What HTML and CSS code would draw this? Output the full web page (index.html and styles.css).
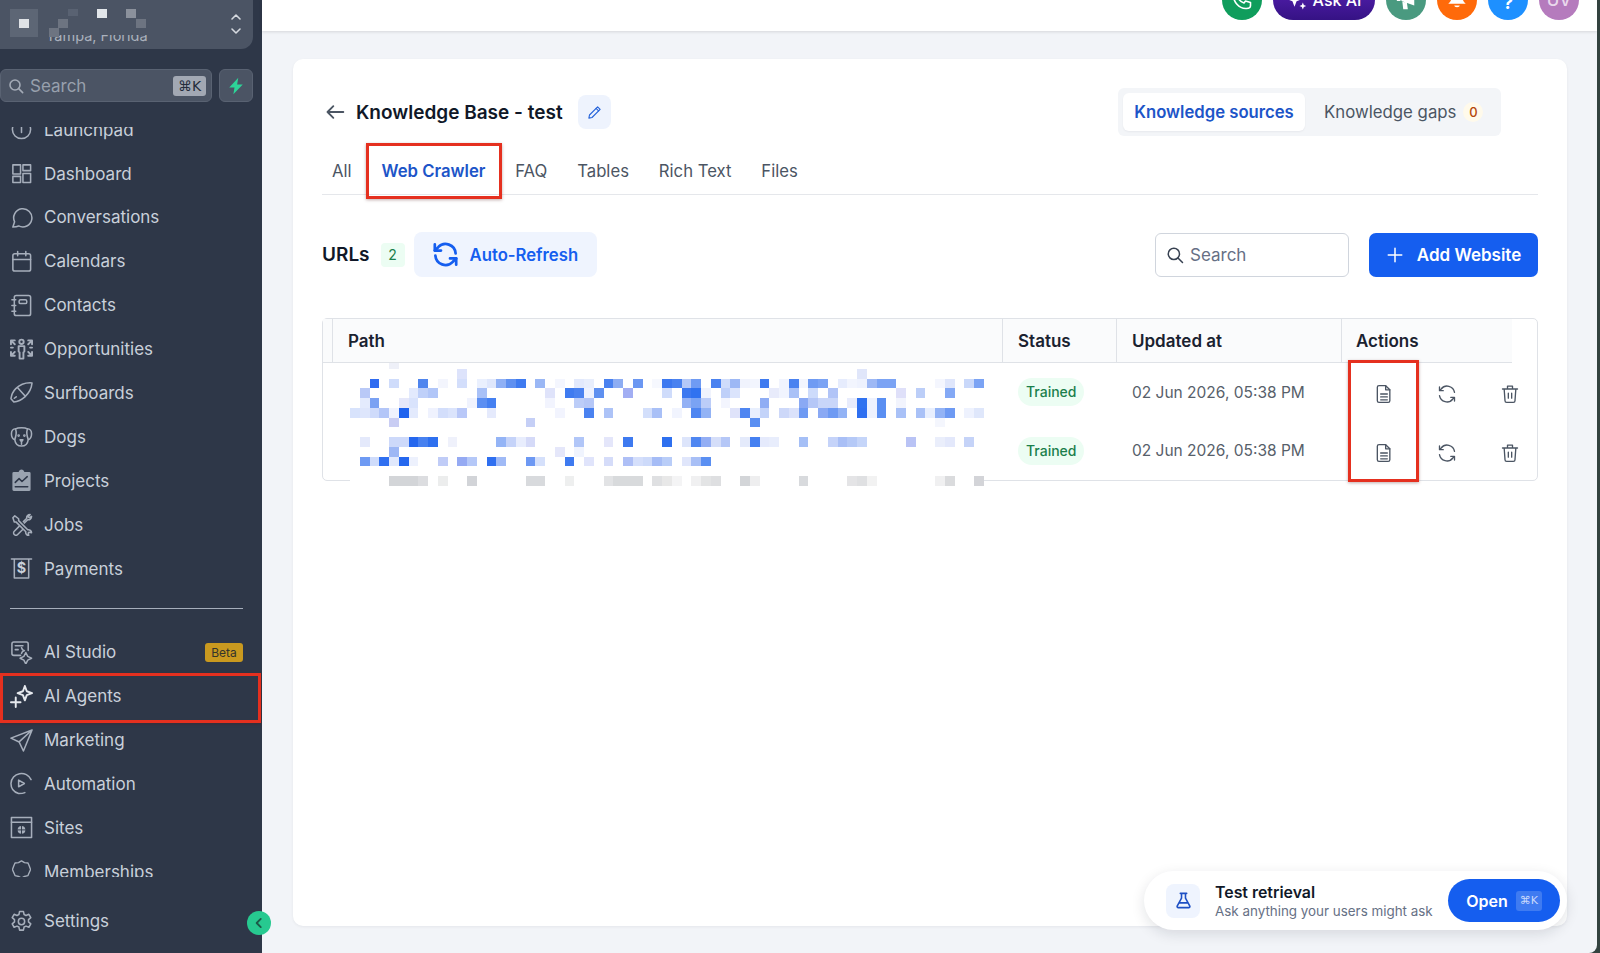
FILE: index.html
```html
<!DOCTYPE html>
<html lang="en">
<head>
  <meta charset="UTF-8" />
  <title>Knowledge Base - test</title>
  <link rel="stylesheet" href="styles.css">
</head>
<body>
<div class="app">

  <!-- Sidebar -->
  <aside class="sidebar">
    <div class="account">
      <span class="account-place">Tampa, Florida</span>
      <svg class="account-mosaic" viewBox="0 0 200 49">
        <rect class="plain" x="0" y="0" width="200" height="35" fill="#4b5464"/>
        <rect class="plain" x="10" y="9" width="28" height="28" fill="#5d6675"/>
        <rect class="plain" x="19" y="19" width="10" height="9" fill="#dfe2e6"/>
        <rect class="plain" x="97" y="9" width="10" height="9" fill="#e2e6ea"/>
        <rect class="plain" x="126" y="9" width="10" height="9" fill="#8b919c"/>
        <rect class="plain" x="136" y="19" width="10" height="9" fill="#6d7481"/>
        <rect class="plain" x="58" y="19" width="10" height="9" fill="#6d7481"/>
        <rect class="plain" x="49" y="28" width="10" height="9" fill="#6d7481"/>
        <rect class="plain" x="68" y="9" width="10" height="7" fill="#596272"/>
      </svg>
      <svg class="account-chevrons" viewBox="0 0 14 24" fill="none" stroke="#d5d9df" stroke-width="1.6" stroke-linecap="round" stroke-linejoin="round">
        <path d="M3 7l4-4 4 4"/><path d="M3 17l4 4 4-4"/>
      </svg>
    </div>

    <div class="side-search-row">
      <div class="side-search">
        <svg class="icon-16" viewBox="0 0 24 24" fill="none" stroke="#a3aab6" stroke-width="2.4" stroke-linecap="round"><circle cx="10.5" cy="10.5" r="7.5"/><path d="M16 16l6 6"/></svg>
        <span class="side-search-text">Search</span>
        <span class="side-kbd">⌘K</span>
      </div>
      <div class="side-bolt">
        <svg class="icon-18" viewBox="0 0 24 24" fill="#2dd498"><path d="M15 1L3 14h7L8.500 23 21 10h-7.500z"/></svg>
      </div>
    </div>

    <nav class="nav-scroll">
      <div class="nav-list">
        <a class="nav-item">
          <svg class="nav-icon" viewBox="0 0 24 24"><circle cx="12" cy="12" r="9.5"/><path d="M12 8v7"/></svg>
          <span>Launchpad</span>
        </a>
        <a class="nav-item">
          <svg class="nav-icon" viewBox="0 0 24 24"><rect x="3" y="3" width="8" height="9.500"/><rect x="13.500" y="3" width="8" height="6"/><rect x="3" y="15" width="8" height="6.500"/><rect x="13.500" y="12" width="8" height="9.500"/></svg>
          <span>Dashboard</span>
        </a>
        <a class="nav-item">
          <svg class="nav-icon" viewBox="0 0 24 24"><path d="M3 22l1.800-5.500A9.500 9.500 0 1 1 9 20.800c-1.500.6-3.500 1-6 1.200z"/></svg>
          <span>Conversations</span>
        </a>
        <a class="nav-item">
          <svg class="nav-icon" viewBox="0 0 24 24"><rect x="3" y="4" width="18.500" height="18" rx="2"/><path d="M3 10h18.500M8 1.500V6M16.500 1.500V6"/></svg>
          <span>Calendars</span>
        </a>
        <a class="nav-item">
          <svg class="nav-icon" viewBox="0 0 24 24"><rect x="4.500" y="1.500" width="17" height="21" rx="2"/><rect x="9.500" y="6" width="8" height="4" rx="1.500"/><path d="M2 6h4M2 12h4M2 18h4"/></svg>
          <span>Contacts</span>
        </a>
        <a class="nav-item">
          <svg class="nav-icon nav-icon-dense" viewBox="0 0 24 24"><circle cx="12" cy="4" r="2.300"/><path d="M9 8.500h6v5.500l-1 1v6.500h-4V15l-1-1z"/><path d="M1 6.500V2.500h4M1.500 3l3.500 3.500M23 6.500V2.500h-4M22.500 3L19 6.500M1 14.500v4h4M1.500 18l3.500-3.500M23 14.500v4h-4M22.500 18L19 14.500M1 10h2M21 10h2"/></svg>
          <span>Opportunities</span>
        </a>
        <a class="nav-item">
          <svg class="nav-icon" viewBox="0 0 24 24"><path d="M23 2c-7-.5-13 2-17 6-3 3-4.500 7-5 10.500L4 22c3.500-.5 8-2.500 11.500-5.500 4.500-4 7-9 7.500-14.500z"/><path d="M4.500 18l2-1.500M8 7l8 9"/></svg>
          <span>Surfboards</span>
        </a>
        <a class="nav-item">
          <svg class="nav-icon" viewBox="0 0 24 24"><path d="M6 4C3 4 1.500 6 1.500 9c0 3 1.500 5.500 3.500 6.500C5.500 19 8 22 12 22s6.500-3 7-6.500c2-1 3.500-3.500 3.500-6.500 0-3-1.500-5-4.500-5-2-1.500-10-1.500-12 0z"/><path d="M6 5c1 3 .5 6-1 10M18 5c-1 3-.5 6 1 10M10.500 15.500h3L12 17.500zM12 17.500V20"/><circle cx="9" cy="11" r=".6"/><circle cx="15" cy="11" r=".6"/></svg>
          <span>Dogs</span>
        </a>
        <a class="nav-item">
          <svg class="nav-icon nav-icon-fill" viewBox="0 0 24 24"><path d="M4 3h5c.5-1.500 1.500-2.500 3-2.500S14.500 1.500 15 3h5a1.500 1.500 0 0 1 1.500 1.500v17A1.500 1.500 0 0 1 20 23H4a1.500 1.500 0 0 1-1.500-1.500v-17A1.500 1.500 0 0 1 4 3z"/><path class="cut" d="M5.500 14l4-4 3 3 5.500-5M5.500 18.500h13"/></svg>
          <span>Projects</span>
        </a>
        <a class="nav-item">
          <svg class="nav-icon" viewBox="0 0 24 24"><path d="M3 5l2-2 4 3v2l9.500 9.500c2-.5 4 1 4 3l-2.500-.5-1 1 .5 2.500c-2 0-3.500-2-3-4L6.500 9.500h-2z"/><path d="M14 9l3.500-3.500c-.5-2 1-4 3.500-4L19 4l1 1 2.500-1.500c0 2.500-2 4-4 3.500L15 10.500M9.500 14l-5 5c-1 1-1 2.500 0 3.500s2.500 1 3.500 0l5-5"/></svg>
          <span>Jobs</span>
        </a>
        <a class="nav-item">
          <svg class="nav-icon" viewBox="0 0 24 24"><path d="M1.500 2h21M4.500 2v20h15V2"/><text class="nav-icon-text" x="12" y="17" text-anchor="middle">$</text></svg>
          <span>Payments</span>
        </a>
        <hr class="nav-divider">
        <a class="nav-item">
          <svg class="nav-icon" viewBox="0 0 24 24"><path d="M11 15H4a2 2 0 0 1-2-2V3a2 2 0 0 1 2-2h13a2 2 0 0 1 2 2v7"/><path d="M5.500 5h8M5.500 9h3"/><path d="M16.500 12l2 4 4 2-4 2-2 4-2-4-4-2 4-2z"/><path d="M12 7l1 2 2 1-2 1-1 2"/></svg>
          <span>AI Studio</span>
          <span class="beta">Beta</span>
        </a>
        <a class="nav-item">
          <svg class="nav-icon nav-icon-bright" viewBox="0 0 24 24"><path d="M15.500 1l2 5.500 5.500 2-5.500 2-2 5.500-2-5.500-5.500-2 5.500-2z"/><path d="M6 13v10M1 18h10"/></svg>
          <span>AI Agents</span>
        </a>
        <a class="nav-item">
          <svg class="nav-icon" viewBox="0 0 24 24"><path d="M23 1L1 9.500l8.500 4L14 23zM23 1L9.500 13.500"/></svg>
          <span>Marketing</span>
        </a>
        <a class="nav-item">
          <svg class="nav-icon" viewBox="0 0 24 24"><path d="M22 8A11 11 0 0 0 1 12c0 5 3 9 8 10.500 2 0 4.500 0 6.500-1"/><path d="M9 8.500v7l6-3.500z"/></svg>
          <span>Automation</span>
        </a>
        <a class="nav-item">
          <svg class="nav-icon" viewBox="0 0 24 24"><rect x="1.500" y="1.500" width="21" height="21"/><path d="M1.500 6.500h21"/><circle class="solid" cx="12" cy="14.500" r="4"/><path class="cut-thin" d="M8 14.500h8M12 10.500v8"/></svg>
          <span>Sites</span>
        </a>
        <a class="nav-item nav-item-clipped">
          <svg class="nav-icon" viewBox="1 1 22 22"><path d="M12 2l3.500 2 4 .5 1.500 3.500 1.500 4-1.500 3.500-1.500 3.500-4 1-3.500 2-3.500-2-4-1L3 15.500 1.500 12 3 8l1.500-3.500 4-.5z"/></svg>
          <span>Memberships</span>
        </a>
      </div>
    </nav>

    <a class="nav-item nav-settings">
      <svg class="nav-icon" viewBox="0 0 24 24"><circle cx="12" cy="12" r="3.300"/><path d="M10 1.500h4l.7 3.200 2 1 3-1.200 2 3.500-2.400 2.100v2.300l2.400 2.100-2 3.500-3-1.200-2 1-.7 3.200h-4l-.7-3.200-2-1-3 1.200-2-3.500 2.400-2.100v-2.300L2.300 8l2-3.500 3 1.200 2-1z"/></svg>
      <span>Settings</span>
    </a>

    <div class="annot annot-agents"></div>
  </aside>

  <button class="collapse">
    <svg viewBox="0 0 24 24" fill="none" stroke="#1c5a48" stroke-width="3.200" stroke-linecap="round" stroke-linejoin="round"><path d="M15 5l-7 7 7 7"/></svg>
  </button>

  <!-- Main -->
  <div class="main">
    <header class="topbar">
      <span class="top-circle top-phone">
        <svg viewBox="0 0 24 24" fill="none" stroke="#fff" stroke-width="1.600" stroke-linecap="round" stroke-linejoin="round"><path d="M5 2l3 0 1.500 5-2 1.500c1 3 3.500 5.500 6.500 6.500l1.500-2 5 1.500 0 3c0 2-2 3-4 3C9 21 3 14 3 5c0-1.500 .5-3 2-3z"/></svg>
      </span>
      <span class="ask-ai">
        <svg viewBox="0 0 24 24" fill="#fff"><path d="M9 2l2.500 6.500L18 11l-6.500 2.500L9 20l-2.500-6.500L0 11l6.500-2.500z"/><path d="M19 15l1.200 3 2.800 1.200-2.800 1.200L19 23.500l-1.200-3.100-2.800-1.200 2.800-1.200z"/></svg>
        Ask AI
      </span>
      <span class="top-circle top-news">
        <svg viewBox="0 0 24 24" fill="#fff"><path d="M2 4h4v9H2zM7 5l14-4v17L7 13zM8 14l5 1 1 7H9z"/></svg>
      </span>
      <span class="top-circle top-bell">
        <svg viewBox="0 0 24 24" fill="#fff"><path d="M12 1c4 0 6 3 6 7 0 4 1 6 3.500 8h-19C5 14 6 12 6 8c0-4 2-7 6-7z"/><path d="M9 18h6a3 2 0 0 1-6 0z"/></svg>
      </span>
      <span class="top-circle top-help">?</span>
      <span class="top-circle top-user">UV</span>
    </header>

    <div class="content">
      <section class="card">
        <div class="kb-head">
          <div class="kb-title-wrap">
            <svg class="kb-back" viewBox="0 0 24 24" fill="none" stroke="#4b5563" stroke-width="2.200" stroke-linecap="round" stroke-linejoin="round"><path d="M22 12H3M10 5l-7 7 7 7"/></svg>
            <h1 class="kb-title">Knowledge Base - test</h1>
            <span class="kb-edit">
              <svg viewBox="0 0 24 24" fill="none" stroke="#2563d9" stroke-width="1.800" stroke-linecap="round" stroke-linejoin="round"><path d="M17 3l4 4L8 20l-5 1 1-5z"/><path d="M14.500 5.500l4 4"/></svg>
            </span>
          </div>
          <div class="segment">
            <span class="segment-item segment-on">Knowledge sources</span>
            <span class="segment-item">Knowledge gaps <b class="gap-count">0</b></span>
          </div>
        </div>

        <div class="tabs">
          <span class="tab">All</span>
          <span class="tab tab-on">Web Crawler</span>
          <span class="tab">FAQ</span>
          <span class="tab">Tables</span>
          <span class="tab">Rich Text</span>
          <span class="tab">Files</span>
          <div class="annot annot-tab"></div>
        </div>

        <div class="url-bar">
          <span class="url-label">URLs</span>
          <span class="url-count">2</span>
          <button class="auto-refresh">
            <svg viewBox="0 0 24 24" fill="none" stroke="#155eef" stroke-width="2.400" stroke-linecap="round" stroke-linejoin="round"><path d="M21 11A9 9 0 0 0 5.500 5.500L2.500 8.500"/><path d="M2.500 3v5.500H8"/><path d="M3 13a9 9 0 0 0 15.500 5.500l3-3"/><path d="M21.500 21v-5.500H16"/></svg>
            Auto-Refresh
          </button>
          <div class="url-search">
            <svg viewBox="0 0 24 24" fill="none" stroke="#374151" stroke-width="2" stroke-linecap="round"><circle cx="10.500" cy="10.500" r="7.500"/><path d="M16 16l6 6"/></svg>
            Search
          </div>
          <button class="add-site">
            <svg viewBox="0 0 24 24" fill="none" stroke="#fff" stroke-width="2" stroke-linecap="round"><path d="M12 3v18M3 12h18"/></svg>
            Add Website
          </button>
        </div>

        <div class="url-table">
          <div class="tr thead">
            <div class="th th-stub"></div>
            <div class="th">Path</div>
            <div class="th">Status</div>
            <div class="th">Updated at</div>
            <div class="th th-last">Actions</div>
          </div>
          <div class="tr">
            <div class="td"></div>
            <div class="td"></div>
            <div class="td"><span class="pill">Trained</span></div>
            <div class="td td-date">02 Jun 2026, 05:38 PM</div>
            <div class="td td-actions">
              <svg class="act" viewBox="0 0 24 24"><path d="M6 2h8l5 5v13a2 2 0 0 1-2 2H6a2 2 0 0 1-2-2V4a2 2 0 0 1 2-2z"/><path d="M14 2v5h5M8 12h8M8 15.500h8M8 19h8"/></svg>
              <svg class="act" viewBox="0 0 24 24"><path d="M21 10A9 9 0 0 0 5 6L3.500 7.500"/><path d="M3 3.500V8h4.500"/><path d="M3 14a9 9 0 0 0 16 4l1.500-1.500"/><path d="M21 20.500V16h-4.500"/></svg>
              <svg class="act" viewBox="0 0 24 24"><path d="M3 6h18M9 6V2.500h6V6M5 6l1 14a2 2 0 0 0 2 2h8a2 2 0 0 0 2-2l1-14M10 11v6M14 11v6"/></svg>
            </div>
          </div>
          <div class="tr">
            <div class="td"></div>
            <div class="td"></div>
            <div class="td"><span class="pill">Trained</span></div>
            <div class="td td-date">02 Jun 2026, 05:38 PM</div>
            <div class="td td-actions">
              <svg class="act" viewBox="0 0 24 24"><path d="M6 2h8l5 5v13a2 2 0 0 1-2 2H6a2 2 0 0 1-2-2V4a2 2 0 0 1 2-2z"/><path d="M14 2v5h5M8 12h8M8 15.500h8M8 19h8"/></svg>
              <svg class="act" viewBox="0 0 24 24"><path d="M21 10A9 9 0 0 0 5 6L3.500 7.500"/><path d="M3 3.500V8h4.500"/><path d="M3 14a9 9 0 0 0 16 4l1.500-1.500"/><path d="M21 20.500V16h-4.500"/></svg>
              <svg class="act" viewBox="0 0 24 24"><path d="M3 6h18M9 6V2.500h6V6M5 6l1 14a2 2 0 0 0 2 2h8a2 2 0 0 0 2-2l1-14M10 11v6M14 11v6"/></svg>
            </div>
          </div>

          <!-- blurred out urls -->
          <svg class="mosaic" viewBox="0 0 65 13" shape-rendering="crispEdges">
            <rect x="4" y="0" fill="#eef0f8"/><rect x="11" y="1" fill="#dde3fb"/><rect x="52" y="1" fill="#e0e6fa"/>
            <rect x="2" y="2" fill="#2f6bf0"/><rect x="4" y="2" fill="#cfdcfb"/><rect x="7" y="2" fill="#4f85ee"/><rect x="9" y="2" fill="#f3f5fd"/><rect x="11" y="2" fill="#d3defb"/><rect x="13" y="2" fill="#eaf0fe"/><rect x="14" y="2" fill="#dfe7fc"/><rect x="15" y="2" fill="#8fb0f5"/><rect x="16" y="2" fill="#5f90f0"/><rect x="17" y="2" fill="#3f7bf0"/><rect x="19" y="2" fill="#9ab7f5"/><rect x="21" y="2" fill="#f4f6fe"/><rect x="23" y="2" fill="#e2e9fc"/><rect x="24" y="2" fill="#e8eefc"/><rect x="26" y="2" fill="#4a82f0"/><rect x="27" y="2" fill="#8dadf3"/><rect x="29" y="2" fill="#6b97f2"/><rect x="31" y="2" fill="#f6f8fe"/><rect x="32" y="2" fill="#3c78f0"/><rect x="33" y="2" fill="#4a82f0"/><rect x="34" y="2" fill="#b5c9f8"/><rect x="35" y="2" fill="#6f9bf3"/><rect x="37" y="2" fill="#4a82f0"/><rect x="38" y="2" fill="#cfdcfb"/><rect x="39" y="2" fill="#9db8f5"/><rect x="40" y="2" fill="#f0f3fd"/><rect x="41" y="2" fill="#f2f5fe"/><rect x="42" y="2" fill="#3f7bf0"/><rect x="44" y="2" fill="#f1f4fe"/><rect x="45" y="2" fill="#4a82f0"/><rect x="46" y="2" fill="#f2f5fe"/><rect x="47" y="2" fill="#6f9bf3"/><rect x="48" y="2" fill="#7ba3f4"/><rect x="50" y="2" fill="#e6ecfd"/><rect x="51" y="2" fill="#f2f5fe"/><rect x="52" y="2" fill="#eef2fe"/><rect x="53" y="2" fill="#9db8f5"/><rect x="54" y="2" fill="#7ba3f4"/><rect x="55" y="2" fill="#7ba3f4"/><rect x="60" y="2" fill="#f4f6fe"/><rect x="61" y="2" fill="#dfe6fb"/><rect x="63" y="2" fill="#c9d8fa"/><rect x="64" y="2" fill="#7ba3f4"/>
            <rect x="1" y="3" fill="#b9c9f7"/><rect x="6" y="3" fill="#e3eafd"/><rect x="7" y="3" fill="#bfd0f9"/><rect x="8" y="3" fill="#b1c6f8"/><rect x="13" y="3" fill="#a9c1f7"/><rect x="20" y="3" fill="#dfe3fa"/><rect x="22" y="3" fill="#3f7bf0"/><rect x="23" y="3" fill="#4a82f0"/><rect x="24" y="3" fill="#eef2fe"/><rect x="25" y="3" fill="#5f90f0"/><rect x="28" y="3" fill="#a2aef3"/><rect x="32" y="3" fill="#cfdcfb"/><rect x="34" y="3" fill="#3c78f0"/><rect x="35" y="3" fill="#3072f0"/><rect x="36" y="3" fill="#f0f3fd"/><rect x="38" y="3" fill="#bfd0f9"/><rect x="39" y="3" fill="#dbe4fc"/><rect x="43" y="3" fill="#e8ebfb"/><rect x="44" y="3" fill="#f1f4fe"/><rect x="45" y="3" fill="#a9c1f7"/><rect x="47" y="3" fill="#cddbfb"/><rect x="49" y="3" fill="#b1c4f7"/><rect x="56" y="3" fill="#dfe0f9"/><rect x="58" y="3" fill="#bccef8"/><rect x="61" y="3" fill="#84a9f5"/>
            <rect x="1" y="4" fill="#e4ebfd"/><rect x="2" y="4" fill="#7aa1f3"/><rect x="5" y="4" fill="#e6e8fa"/><rect x="6" y="4" fill="#d9e3fc"/><rect x="12" y="4" fill="#f0f3fe"/><rect x="13" y="4" fill="#5c8ff2"/><rect x="14" y="4" fill="#4580f1"/><rect x="20" y="4" fill="#f2f4fe"/><rect x="23" y="4" fill="#bccdf8"/><rect x="24" y="4" fill="#b5c7f7"/><rect x="34" y="4" fill="#93b1f5"/><rect x="35" y="4" fill="#7aa3f4"/><rect x="36" y="4" fill="#bccdf8"/><rect x="38" y="4" fill="#f3f5fe"/><rect x="42" y="4" fill="#8fadf4"/><rect x="46" y="4" fill="#8aa9f4"/><rect x="47" y="4" fill="#b5c7f7"/><rect x="48" y="4" fill="#c9d6f9"/><rect x="49" y="4" fill="#c9d6f9"/><rect x="51" y="4" fill="#e8ecfc"/><rect x="52" y="4" fill="#3072f0"/><rect x="53" y="4" fill="#eef2fe"/><rect x="54" y="4" fill="#5a8ff2"/><rect x="56" y="4" fill="#f2f4fd"/>
            <rect x="0" y="5" fill="#d8e3fc"/><rect x="1" y="5" fill="#dee6fc"/><rect x="2" y="5" fill="#cfdbfb"/><rect x="3" y="5" fill="#b3c6f8"/><rect x="4" y="5" fill="#f0f3fe"/><rect x="5" y="5" fill="#1f63ee"/><rect x="6" y="5" fill="#e3eafd"/><rect x="8" y="5" fill="#eff2fe"/><rect x="9" y="5" fill="#d3defb"/><rect x="10" y="5" fill="#dbe4fc"/><rect x="11" y="5" fill="#b9c8f8"/><rect x="14" y="5" fill="#e5eafc"/><rect x="21" y="5" fill="#f2f4fe"/><rect x="24" y="5" fill="#4a82f0"/><rect x="26" y="5" fill="#adc3f7"/><rect x="30" y="5" fill="#d3dffb"/><rect x="31" y="5" fill="#a9c0f7"/><rect x="33" y="5" fill="#f1f4fe"/><rect x="35" y="5" fill="#4f86f1"/><rect x="36" y="5" fill="#93b3f5"/><rect x="39" y="5" fill="#dfe3fa"/><rect x="40" y="5" fill="#4f86f1"/><rect x="41" y="5" fill="#e8effe"/><rect x="42" y="5" fill="#c3d3f9"/><rect x="44" y="5" fill="#cdd8f9"/><rect x="45" y="5" fill="#dbe2fb"/><rect x="46" y="5" fill="#6e9af3"/><rect x="48" y="5" fill="#8aa9f4"/><rect x="49" y="5" fill="#6e9af3"/><rect x="50" y="5" fill="#93b3f5"/><rect x="52" y="5" fill="#2f6ff0"/><rect x="53" y="5" fill="#eef2fe"/><rect x="54" y="5" fill="#5a8ff2"/><rect x="56" y="5" fill="#a9c1f7"/><rect x="58" y="5" fill="#a9c1f7"/><rect x="59" y="5" fill="#e8effe"/><rect x="60" y="5" fill="#93b3f5"/><rect x="61" y="5" fill="#6e9af3"/><rect x="63" y="5" fill="#eef2fe"/><rect x="64" y="5" fill="#dfe7fb"/>
            <rect x="4" y="6" fill="#c9cdf3"/><rect x="18" y="6" fill="#c5cff6"/><rect x="41" y="6" fill="#5a8ff2"/><rect x="60" y="6" fill="#f4f6fd"/>
            <rect x="1" y="8" fill="#e4e9fb"/><rect x="4" y="8" fill="#cdd9fa"/><rect x="5" y="8" fill="#cdd9fa"/><rect x="6" y="8" fill="#2567ee"/><rect x="7" y="8" fill="#4781f0"/><rect x="8" y="8" fill="#2e70ef"/><rect x="10" y="8" fill="#eff1fb"/><rect x="15" y="8" fill="#94b4f6"/><rect x="16" y="8" fill="#c5d3f9"/><rect x="17" y="8" fill="#e8edfd"/><rect x="18" y="8" fill="#d5daf8"/><rect x="23" y="8" fill="#b1c6f8"/><rect x="26" y="8" fill="#e4e6fa"/><rect x="28" y="8" fill="#3e7af0"/><rect x="32" y="8" fill="#2e70ef"/><rect x="34" y="8" fill="#dde5fb"/><rect x="35" y="8" fill="#4f86f1"/><rect x="36" y="8" fill="#93aef4"/><rect x="37" y="8" fill="#d5def9"/><rect x="38" y="8" fill="#b5c7f7"/><rect x="40" y="8" fill="#e4eafb"/><rect x="41" y="8" fill="#4580f1"/><rect x="42" y="8" fill="#e5eafc"/><rect x="43" y="8" fill="#e8edfc"/><rect x="46" y="8" fill="#a5bff6"/><rect x="49" y="8" fill="#c5d3f9"/><rect x="50" y="8" fill="#a9bff6"/><rect x="51" y="8" fill="#b5c9f7"/><rect x="52" y="8" fill="#c5d5f9"/><rect x="57" y="8" fill="#b9c3f5"/><rect x="60" y="8" fill="#eaeefb"/><rect x="61" y="8" fill="#e3e8fb"/><rect x="63" y="8" fill="#c5d3f8"/>
            <rect x="4" y="9" fill="#9db7f5"/><rect x="21" y="9" fill="#e5e7fa"/><rect x="23" y="9" fill="#f0f4fe"/>
            <rect x="1" y="10" fill="#6e9af3"/><rect x="2" y="10" fill="#cfdcfb"/><rect x="3" y="10" fill="#2f6ff0"/><rect x="4" y="10" fill="#e0e8fc"/><rect x="5" y="10" fill="#2567ee"/><rect x="6" y="10" fill="#edf1fd"/><rect x="9" y="10" fill="#c0ccf7"/><rect x="11" y="10" fill="#95aaf3"/><rect x="12" y="10" fill="#b5c8f8"/><rect x="14" y="10" fill="#2f6ff0"/><rect x="15" y="10" fill="#a0baf6"/><rect x="18" y="10" fill="#6d98f3"/><rect x="19" y="10" fill="#d5e0fb"/><rect x="22" y="10" fill="#3e7af0"/><rect x="24" y="10" fill="#e0e4fb"/><rect x="26" y="10" fill="#d5dcf9"/><rect x="28" y="10" fill="#aebff6"/><rect x="29" y="10" fill="#d5dffb"/><rect x="30" y="10" fill="#cddafa"/><rect x="31" y="10" fill="#a5bcf6"/><rect x="32" y="10" fill="#b9cdf8"/><rect x="34" y="10" fill="#e0e6fb"/><rect x="35" y="10" fill="#a8bff6"/><rect x="36" y="10" fill="#5a8ff2"/>
            <rect x="4" y="12" fill="#d3d5d8"/><rect x="5" y="12" fill="#d3d5d8"/><rect x="6" y="12" fill="#d3d5d8"/><rect x="7" y="12" fill="#dcdde0"/><rect x="9" y="12" fill="#eceded"/><rect x="12" y="12" fill="#d2d4d8"/><rect x="18" y="12" fill="#d8dadd"/><rect x="19" y="12" fill="#d8dadd"/><rect x="22" y="12" fill="#eeefef"/><rect x="26" y="12" fill="#e2e3e5"/><rect x="27" y="12" fill="#d8dadc"/><rect x="28" y="12" fill="#d8dadc"/><rect x="29" y="12" fill="#d8dadc"/><rect x="31" y="12" fill="#dfe0e2"/><rect x="32" y="12" fill="#e8e8e8"/><rect x="33" y="12" fill="#f4f4f5"/><rect x="35" y="12" fill="#f0f0f1"/><rect x="36" y="12" fill="#e3e4e5"/><rect x="37" y="12" fill="#dedfe1"/><rect x="40" y="12" fill="#d3d5d8"/><rect x="41" y="12" fill="#eeeeef"/><rect x="46" y="12" fill="#d8dadd"/><rect x="51" y="12" fill="#e4e4e6"/><rect x="52" y="12" fill="#dfe0e2"/><rect x="53" y="12" fill="#f2f2f2"/><rect x="60" y="12" fill="#f0f0f1"/><rect x="61" y="12" fill="#dadbdd"/><rect x="64" y="12" fill="#d3d4d8"/>
          </svg>

          <div class="annot annot-actions"></div>
        </div>
      </section>
    </div>

    <div class="retrieval">
      <span class="retrieval-icon">
        <svg viewBox="0 0 24 24" fill="none" stroke="#1d4fc4" stroke-width="2" stroke-linecap="round" stroke-linejoin="round"><path d="M8 3h8M9.500 3v6L4 19a1.500 1.500 0 0 0 1.500 2h13a1.500 1.500 0 0 0 1.500-2L14.500 9V3M7 15h10"/></svg>
      </span>
      <div class="retrieval-text">
        <div class="retrieval-title">Test retrieval</div>
        <div class="retrieval-sub">Ask anything your users might ask</div>
      </div>
      <button class="retrieval-open">Open <span class="open-kbd">⌘K</span></button>
    </div>
  </div>
</div>
</body>
</html>
```

FILE: styles.css
```css
* {
  box-sizing: border-box;
}
body {
  margin: 0;
  height: 953px;
  overflow: hidden;
  background: #33423f;
  font-family: Inter, "Liberation Sans", sans-serif;
  color: #111827;
}
button {
  font-family: inherit;
  border: none;
  cursor: pointer;
}
.app {
  position: relative;
  display: flex;
  width: 1597px;
  height: 953px;
  border-bottom-right-radius: 8px;
  overflow: hidden;
}

/* Sidebar */
.sidebar {
  position: relative;
  flex: 0 0 262px;
  background: #2e3748;
  display: flex;
  flex-direction: column;
}
.account {
  position: relative;
  height: 49px;
  width: 253px;
  background: #4b5464;
  border-radius: 0 0 12px 0;
  flex: none;
}
.account-place {
  position: absolute;
  left: 46px;
  top: 27px;
  font-size: 14.5px;
  color: #aab1bc;
}
.account-mosaic {
  position: absolute;
  left: 0;
  top: 0;
  width: 200px;
  height: 49px;
}
.account-chevrons {
  position: absolute;
  left: 229px;
  top: 12px;
  width: 14px;
  height: 24px;
}
.side-search-row {
  display: flex;
  gap: 7px;
  margin-top: 20px;
  width: 253px;
  flex: none;
}
.side-search {
  width: 212px;
  height: 33px;
  display: flex;
  align-items: center;
  background: #4b5464;
  border: 1px solid #596272;
  border-radius: 6px;
  padding: 0 5px 0 7px;
}
.icon-16 {
  width: 16px;
  height: 16px;
}
.icon-18 {
  width: 18px;
  height: 18px;
}
.side-search-text {
  margin-left: 6px;
  font-size: 17px;
  color: #98a0ad;
}
.side-kbd {
  margin-left: auto;
  width: 33px;
  height: 20px;
  line-height: 20px;
  text-align: center;
  font-size: 14px;
  background: #a2a8b3;
  color: #252d3c;
  border-radius: 3px;
  font-family: "DejaVu Sans", sans-serif;
}
.side-bolt {
  flex: 1;
  height: 33px;
  display: flex;
  align-items: center;
  justify-content: center;
  background: #4b5464;
  border: 1px solid #596272;
  border-radius: 6px;
}
.nav-scroll {
  margin-top: 25px;
  height: 750px;
  overflow: hidden;
  flex: none;
}
.nav-list {
  margin-top: -19.3px;
}
.nav-item {
  display: flex;
  align-items: center;
  height: 43.9px;
  padding: 0 19px 0 10px;
  font-size: 17px;
  color: #c9d0da;
}
.nav-item > span:first-of-type {
  margin-left: 11px;
}
.nav-item-clipped .nav-icon {
  width: 19px;
  height: 19px;
  margin: 0 2px 5px;
}
.nav-icon {
  width: 23px;
  height: 23px;
  flex: none;
  fill: none;
  stroke: #a6aebb;
  stroke-width: 1.6;
  stroke-linecap: round;
  stroke-linejoin: round;
}
.nav-icon-bright {
  stroke: #e6e9ee;
  stroke-width: 2;
}
.nav-icon-dense {
  stroke-width: 2;
}
.nav-icon-fill {
  fill: #9aa3b0;
  stroke: none;
}
.nav-icon-fill .cut {
  fill: none;
  stroke: #2e3748;
  stroke-width: 1.6;
}
.nav-icon .solid {
  fill: #a6aebb;
  stroke: none;
}
.nav-icon .cut-thin {
  stroke: #2e3748;
  stroke-width: 1;
}
.nav-icon-text {
  font-size: 15px;
  font-weight: 700;
  fill: #c9d0da;
  stroke: none;
  font-family: Inter, sans-serif;
}
.nav-divider {
  margin: 17.8px 19px 21px 10px;
  border: none;
  height: 1px;
  background: #a6aebb;
}
.beta {
  margin-left: auto;
  width: 38px;
  height: 19px;
  line-height: 19px;
  text-align: center;
  font-size: 12px;
  border-radius: 3px;
  background: #c9991f;
  color: #33342c;
}
.nav-settings {
  margin-top: 22.5px;
  flex: none;
}

/* Red annotation boxes */
.annot {
  position: absolute;
  border: 3px solid #e5301f;
  box-shadow: 0 1px 3px rgba(80, 20, 20, 0.35);
  pointer-events: none;
}
.annot-agents {
  left: 0;
  top: 673px;
  width: 261px;
  height: 50px;
}
.annot-tab {
  left: 44px;
  top: -3px;
  width: 135.500px;
  height: 56px;
}
.annot-actions {
  left: 1025px;
  top: 41px;
  width: 71px;
  height: 122px;
  z-index: 2;
}
.collapse {
  position: absolute;
  left: 247px;
  top: 911px;
  width: 24px;
  height: 24px;
  padding: 5px;
  border-radius: 50%;
  background: #27c990;
  display: flex;
  z-index: 2;
}

/* Main */
.main {
  position: relative;
  flex: 1;
  display: flex;
  flex-direction: column;
  background: #f2f4f8;
}
.topbar {
  height: 31px;
  flex: none;
  background: #fff;
  box-shadow: 0 1px 3px rgba(0, 0, 0, 0.12);
  display: flex;
  justify-content: flex-end;
  gap: 11px;
  padding-right: 18px;
  overflow: hidden;
  position: relative;
}
.top-circle {
  width: 40px;
  height: 40px;
  margin-top: -20px;
  border-radius: 50%;
  flex: none;
  display: flex;
  align-items: center;
  justify-content: center;
  color: #fff;
  font-size: 17px;
  font-weight: 500;
}
.top-circle svg {
  width: 22px;
  height: 22px;
}
.top-phone {
  background: #0f9d5c;
}
.top-phone svg {
  width: 24px;
  height: 24px;
}
.top-news {
  background: #4a9a80;
}
.top-bell {
  background: #ff6a0a;
}
.top-help {
  background: #1e90ff;
  font-weight: 700;
  font-size: 18px;
  padding-top: 5px;
}
.top-user {
  background: #b57bbd;
  color: #e9d8ec;
}
.ask-ai {
  width: 102px;
  height: 40px;
  margin-top: -20px;
  border-radius: 20px;
  background: linear-gradient(#5a22b8, #351284);
  color: #fff;
  font-size: 16px;
  font-weight: 500;
  display: flex;
  align-items: center;
  justify-content: center;
  gap: 6px;
}
.ask-ai svg {
  width: 20px;
  height: 20px;
}
.content {
  flex: 1;
  padding: 28px 30px 27px 31px;
}
.card {
  height: 867px;
  background: #fff;
  border-radius: 10px;
  padding: 29px 29px 0;
  box-shadow: 0 1px 3px rgba(16, 24, 40, 0.06);
}
.kb-head {
  display: flex;
  justify-content: space-between;
  align-items: center;
  height: 48px;
  padding-right: 37px;
}
.kb-title-wrap {
  display: flex;
  align-items: center;
}
.kb-back {
  width: 20px;
  height: 20px;
  margin-left: 3px;
}
.kb-title {
  margin: 0 0 0 11px;
  font-size: 19px;
  font-weight: 600;
  color: #101828;
}
.kb-edit {
  margin-left: 15px;
  width: 33px;
  height: 34px;
  background: #eef3fd;
  border-radius: 8px;
  display: flex;
  align-items: center;
  justify-content: center;
}
.kb-edit svg {
  width: 15px;
  height: 15px;
}
.segment {
  width: 383px;
  height: 48px;
  padding: 5px;
  background: #f3f5f8;
  border-radius: 6px;
  display: flex;
}
.segment-item {
  display: flex;
  align-items: center;
  padding: 0 0 0 11px;
  font-size: 16.8px;
  color: #4b5563;
  margin-left: 8px;
  white-space: nowrap;
}
.segment-on {
  margin-left: 0;
  width: 182px;
  justify-content: center;
  padding: 0;
  background: #fff;
  border-radius: 6px;
  color: #1d55c8;
  font-weight: 600;
  font-size: 16.7px;
  box-shadow: 0 1px 2px rgba(16, 24, 40, 0.05);
}
.gap-count {
  margin-left: 7px;
  width: 20px;
  height: 20px;
  line-height: 20px;
  text-align: center;
  background: #fffaeb;
  border-radius: 50%;
  color: #b54708;
  font-size: 13px;
  font-weight: 500;
}
.tabs {
  position: relative;
  display: flex;
  height: 49px;
  margin-top: 10px;
  padding: 2px 0 0 10px;
  border-bottom: 1px solid #e5e7eb;
  align-items: center;
  font-size: 16.7px;
  color: #4b5563;
}
.tab {
  margin-right: 29.9px;
}
.tab-on {
  color: #1d55c8;
  font-weight: 600;
}
.url-bar {
  display: flex;
  align-items: center;
  height: 45px;
  margin-top: 37px;
}
.url-label {
  font-size: 19px;
  font-weight: 600;
  color: #101828;
}
.url-count {
  margin-left: 11px;
  width: 24px;
  height: 24px;
  line-height: 24px;
  text-align: center;
  font-size: 14px;
  color: #1b7f4c;
  background: #ecfdf3;
  border-radius: 4px;
}
.auto-refresh {
  margin-left: 9px;
  width: 183px;
  height: 45px;
  display: flex;
  align-items: center;
  gap: 11px;
  padding: 0 0 0 18px;
  background: #eff4fe;
  border-radius: 8px;
  color: #155eef;
  font-size: 16.7px;
  font-weight: 600;
}
.auto-refresh svg {
  width: 27px;
  height: 27px;
}
.url-search {
  margin-left: auto;
  width: 194px;
  height: 44px;
  display: flex;
  align-items: center;
  gap: 6px;
  padding-left: 10px;
  border: 1px solid #d0d5dd;
  border-radius: 6px;
  font-size: 17px;
  color: #667085;
}
.url-search svg {
  width: 18px;
  height: 18px;
}
.add-site {
  margin-left: 20px;
  width: 169px;
  height: 44px;
  display: flex;
  align-items: center;
  justify-content: center;
  gap: 13px;
  background: #155eef;
  border-radius: 7px;
  color: #fff;
  font-size: 17px;
  font-weight: 600;
}
.add-site svg {
  width: 18px;
  height: 18px;
}

/* Table */
.url-table {
  position: relative;
  margin-top: 41px;
  height: 163px;
  border: 1px solid #dfe2e7;
  border-radius: 5px;
}
.tr {
  display: grid;
  grid-template-columns: 10px 670px 114px 225px 170px;
  height: 58.4px;
}
.thead {
  position: relative;
  z-index: 1;
  height: 43px;
  margin-bottom: 1px;
  background: #fafbfc;
  width: 1189px;
  box-shadow: 0 1px 0 #dfe2e7;
}
.th {
  display: flex;
  align-items: center;
  padding-left: 15px;
  font-size: 17px;
  font-weight: 600;
  color: #1a2230;
  border-right: 1px solid #dfe2e7;
}
.th-stub {
  padding: 0;
}
.th-last {
  border-right: none;
  padding-left: 14px;
}
.td {
  display: flex;
  align-items: center;
  padding-left: 15px;
  font-size: 15.5px;
  color: #57606a;
}
.td-actions {
  padding: 4px 0 0 32px;
  gap: 43px;
}
.act {
  width: 20px;
  height: 20px;
  flex: none;
  fill: none;
  stroke: #4b5563;
  stroke-width: 1.6;
  stroke-linecap: round;
  stroke-linejoin: round;
}
.pill {
  height: 28px;
  line-height: 28px;
  padding: 0 8px;
  font-size: 14px;
  font-weight: 500;
  color: #1b7f4c;
  background: #ecfdf3;
  border-radius: 14px;
}
.mosaic {
  position: absolute;
  left: 27px;
  top: 40px;
  width: 634px;
  height: 127px;
  background: #fff;
}
.mosaic rect {
  width: 1px;
  height: 1px;
}

/* Floating test retrieval */
.retrieval {
  position: absolute;
  left: 882px;
  top: 871px;
  width: 423px;
  height: 59px;
  display: flex;
  align-items: center;
  padding: 0 7px 0 22px;
  background: #fff;
  border-radius: 30px;
  box-shadow: 0 4px 14px rgba(16, 24, 40, 0.12);
}
.retrieval-icon {
  width: 34px;
  height: 34px;
  background: #eff4fe;
  border-radius: 8px;
  display: flex;
  align-items: center;
  justify-content: center;
  flex: none;
}
.retrieval-icon svg {
  width: 19px;
  height: 19px;
}
.retrieval-text {
  margin: 1px 0 0 15px;
}
.retrieval-title {
  font-size: 15.9px;
  font-weight: 600;
  color: #101828;
  line-height: 19px;
}
.retrieval-sub {
  font-size: 13.4px;
  color: #667085;
  line-height: 18px;
}
.retrieval-open {
  margin-left: auto;
  width: 112px;
  height: 43px;
  display: flex;
  align-items: center;
  justify-content: center;
  gap: 8px;
  background: #155eef;
  border-radius: 22px;
  color: #fff;
  font-size: 16px;
  font-weight: 600;
}
.open-kbd {
  width: 26px;
  height: 20px;
  line-height: 20px;
  text-align: center;
  background: #3f7bf1;
  border-radius: 3px;
  font-size: 11px;
  font-weight: 400;
  color: #c8d8fb;
  font-family: "DejaVu Sans", sans-serif;
}
```
